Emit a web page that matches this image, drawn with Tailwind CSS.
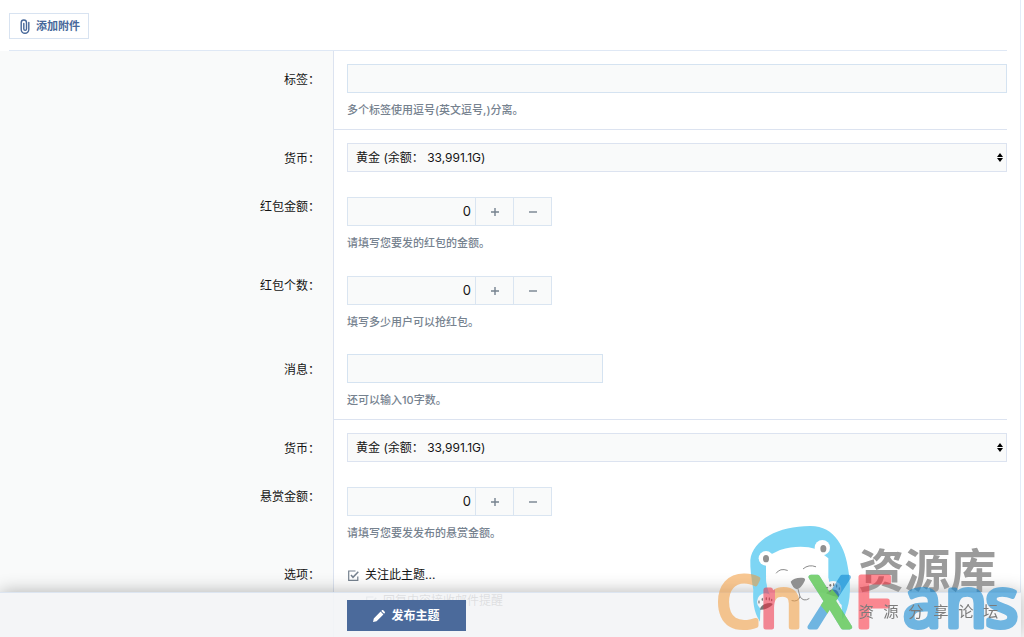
<!DOCTYPE html>
<html lang="zh-CN">

<head>
    <meta charset="UTF-8" />
    <meta name="viewport" content="width=device-width, initial-scale=1" />
    <title>发布主题</title>
    <script src="https://cdn.jsdelivr.net/npm/@tailwindcss/browser@4"></script>
</head>

<body class="bg-white font-[Inter,'Noto_Sans_CJK_SC',sans-serif] text-xs text-[#141414]">
    <div class="min-h-screen flex flex-col mr-[3px] pr-[13px] border-r border-[#e3ecf8]">
        <!-- ADJUNTOS -->
        <div class="ml-[9px] pt-[13px] pb-[11px] border-b border-[#dfe8f5]">
            <button type="button"
                class="flex items-center h-[26px] pl-2.5 pr-2 border border-[#d8e3f1] text-[11px] font-bold text-[#47689a]">
                <svg class="w-[10px] h-[15px] mr-1.5" viewBox="0 0 10 15" fill="none" stroke="currentColor"
                    stroke-width="1.4" stroke-linecap="round">
                    <path d="M8.8 3.5v7A3.8 3.8 0 0 1 1.2 10.500V3.700A2.600 2.600 0 0 1 6.500 3.700V10A1.300 1.300 0 0 1 3.800 10V4.500" />
                </svg>
                添加附件
            </button>
        </div>

        <!-- FORMULARIO -->
        <form id="formTema" class="grow flex flex-col">
            <div class="flex">
                <div class="w-[334px] shrink-0 bg-[#f9fafa] border-r border-[#dce3f0] pt-5 pr-[13px] text-right leading-[18px]">
                    <label for="etiquetas">标签：</label>
                </div>
                <div class="flex-1 pt-[13px] pb-2.5 pl-[13px] border-b border-[#dce3f0]">
                    <input id="etiquetas" type="text" class="block w-full h-[29px] px-2 bg-[#f9fafa] border border-[#d5e3f1]" />
                    <p class="mt-2 text-[11px] leading-[18px] font-medium text-[#76828f]">多个标签使用逗号(英文逗号,)分离。</p>
                </div>
            </div>

            <div class="flex">
                <div class="w-[334px] shrink-0 bg-[#f9fafa] border-r border-[#dce3f0] pt-5 pr-[13px] text-right leading-[18px]">
                    <label for="moneda1">货币：</label>
                </div>
                <div class="flex-1 pt-[13px] pb-[11px] pl-[13px] border-b border-transparent">
                    <div class="relative">
                        <select id="moneda1" class="block appearance-none w-full h-[29px] px-2 bg-[#f9fafa] border border-[#dce3f0]">
                            <option>黄金 (余额： 33,991.1G)</option>
                        </select>
                        <svg class="absolute right-1 top-2.5 w-[6px] h-[9px] pointer-events-none" viewBox="0 0 6 9">
                            <path d="M3 0l3 4H0zM3 9l3-4H0z" />
                        </svg>
                    </div>
                </div>
            </div>

            <div class="flex">
                <div class="w-[334px] shrink-0 bg-[#f9fafa] border-r border-[#dce3f0] pt-[14px] pr-[13px] text-right leading-[18px]">
                    <label for="monto">红包金额：</label>
                </div>
                <div class="flex-1 pt-[13px] pb-2.5 pl-[13px] border-b border-transparent">
                    <div class="contador flex h-[29px] w-[205px] bg-[#f9fafa] border border-[#dae5f1] divide-x divide-[#dae5f1]">
                        <input id="monto" type="text" inputmode="numeric" value="0" class="w-32 px-1 text-right text-[13px]" />
                        <button type="button" data-delta="1" aria-label="增加" class="flex-1 flex items-center justify-center text-[#76828f]">
                            <svg class="w-2 h-2" viewBox="0 0 8 8" stroke="currentColor" stroke-width="1.4"><path d="M0 4h8M4 0v8" /></svg>
                        </button>
                        <button type="button" data-delta="-1" aria-label="减少" class="flex-1 flex items-center justify-center text-[#76828f]">
                            <svg class="w-2 h-2" viewBox="0 0 8 8" stroke="currentColor" stroke-width="1.4"><path d="M0 4h8" /></svg>
                        </button>
                    </div>
                    <p class="mt-2 text-[11px] leading-[18px] font-medium text-[#76828f]">请填写您要发的红包的金额。</p>
                </div>
            </div>

            <div class="flex">
                <div class="w-[334px] shrink-0 bg-[#f9fafa] border-r border-[#dce3f0] pt-[14px] pr-[13px] text-right leading-[18px]">
                    <label for="cantidad">红包个数：</label>
                </div>
                <div class="flex-1 pt-[13px] pb-[9px] pl-[13px] border-b border-transparent">
                    <div class="contador flex h-[29px] w-[205px] bg-[#f9fafa] border border-[#dae5f1] divide-x divide-[#dae5f1]">
                        <input id="cantidad" type="text" inputmode="numeric" value="0" class="w-32 px-1 text-right text-[13px]" />
                        <button type="button" data-delta="1" aria-label="增加" class="flex-1 flex items-center justify-center text-[#76828f]">
                            <svg class="w-2 h-2" viewBox="0 0 8 8" stroke="currentColor" stroke-width="1.4"><path d="M0 4h8M4 0v8" /></svg>
                        </button>
                        <button type="button" data-delta="-1" aria-label="减少" class="flex-1 flex items-center justify-center text-[#76828f]">
                            <svg class="w-2 h-2" viewBox="0 0 8 8" stroke="currentColor" stroke-width="1.4"><path d="M0 4h8" /></svg>
                        </button>
                    </div>
                    <p class="mt-2 text-[11px] leading-[18px] font-medium text-[#76828f]">填写多少用户可以抢红包。</p>
                </div>
            </div>

            <div class="flex">
                <div class="w-[334px] shrink-0 bg-[#f9fafa] border-r border-[#dce3f0] pt-5 pr-[13px] text-right leading-[18px]">
                    <label for="mensaje">消息：</label>
                </div>
                <div class="flex-1 pt-[13px] pb-2.5 pl-[13px] border-b border-[#dce3f0]">
                    <input id="mensaje" type="text" maxlength="10" class="block w-64 h-[29px] px-2 bg-[#f9fafa] border border-[#d5e3f1]" />
                    <p class="mt-2 text-[11px] leading-[18px] font-medium text-[#76828f]">还可以输入10字数。</p>
                </div>
            </div>

            <div class="flex">
                <div class="w-[334px] shrink-0 bg-[#f9fafa] border-r border-[#dce3f0] pt-5 pr-[13px] text-right leading-[18px]">
                    <label for="moneda2">货币：</label>
                </div>
                <div class="flex-1 pt-[13px] pb-[11px] pl-[13px] border-b border-transparent">
                    <div class="relative">
                        <select id="moneda2" class="block appearance-none w-full h-[29px] px-2 bg-[#f9fafa] border border-[#dce3f0]">
                            <option>黄金 (余额： 33,991.1G)</option>
                        </select>
                        <svg class="absolute right-1 top-2.5 w-[6px] h-[9px] pointer-events-none" viewBox="0 0 6 9">
                            <path d="M3 0l3 4H0zM3 9l3-4H0z" />
                        </svg>
                    </div>
                </div>
            </div>

            <div class="flex">
                <div class="w-[334px] shrink-0 bg-[#f9fafa] border-r border-[#dce3f0] pt-[14px] pr-[13px] text-right leading-[18px]">
                    <label for="recompensa">悬赏金额：</label>
                </div>
                <div class="flex-1 pt-[13px] pb-2.5 pl-[13px] border-b border-transparent">
                    <div class="contador flex h-[29px] w-[205px] bg-[#f9fafa] border border-[#dae5f1] divide-x divide-[#dae5f1]">
                        <input id="recompensa" type="text" inputmode="numeric" value="0" class="w-32 px-1 text-right text-[13px]" />
                        <button type="button" data-delta="1" aria-label="增加" class="flex-1 flex items-center justify-center text-[#76828f]">
                            <svg class="w-2 h-2" viewBox="0 0 8 8" stroke="currentColor" stroke-width="1.4"><path d="M0 4h8M4 0v8" /></svg>
                        </button>
                        <button type="button" data-delta="-1" aria-label="减少" class="flex-1 flex items-center justify-center text-[#76828f]">
                            <svg class="w-2 h-2" viewBox="0 0 8 8" stroke="currentColor" stroke-width="1.4"><path d="M0 4h8" /></svg>
                        </button>
                    </div>
                    <p class="mt-2 text-[11px] leading-[18px] font-medium text-[#76828f]">请填写您要发发布的悬赏金额。</p>
                </div>
            </div>

            <!-- OPCIONES -->
            <div class="flex grow">
                <div class="w-[334px] shrink-0 bg-[#f9fafa] border-r border-[#dce3f0] pt-[13px] pr-[13px] text-right leading-[18px]">
                    选项：
                </div>
                <div class="flex-1 pt-[13px] pl-[14px] leading-[18px]">
                    <label class="flex items-center">
                        <span class="grid mr-1.5">
                            <input type="checkbox" checked class="appearance-none col-start-1 row-start-1 w-[11px] h-[11px]" />
                            <svg class="col-start-1 row-start-1 w-[11px] h-[11px] text-[#76828f] pointer-events-none" viewBox="0 0 11 11" fill="none" stroke="currentColor">
                                <path d="M7.500 1H.7V10.300H9.800V6.500" stroke-width="1.2" />
                                <path d="M3 5l2 2.300L10.300 1.700" stroke-width="1.500" />
                            </svg>
                        </span>
                        关注此主题...
                    </label>
                    <label class="flex items-center mt-2 ml-[18px]">
                        <span class="grid mr-1.5">
                            <input type="checkbox" checked class="appearance-none col-start-1 row-start-1 w-[11px] h-[11px]" />
                            <svg class="col-start-1 row-start-1 w-[11px] h-[11px] text-[#76828f] pointer-events-none" viewBox="0 0 11 11" fill="none" stroke="currentColor">
                                <path d="M7.500 1H.7V10.300H9.800V6.500" stroke-width="1.2" />
                                <path d="M3 5l2 2.300L10.300 1.700" stroke-width="1.500" />
                            </svg>
                        </span>
                        回复内容接收邮件提醒
                    </label>
                </div>
            </div>
        </form>
    </div>

    <!-- BARRA INFERIOR -->
    <div class="fixed bottom-0 inset-x-0 mr-[3px] pt-[7px] pb-1.5 pl-[347px] bg-[#f3f4f6]/90 border-t border-[#dce5f1] shadow-[0_0_18px_rgba(0,0,0,0.3)]">
        <button type="submit" form="formTema" class="flex items-center justify-center w-[119px] h-[31px] bg-[#4b6a9b] text-white font-bold">
            <svg class="w-3 h-3 mr-1.5" viewBox="0 0 12 12" fill="currentColor">
                <path d="M0 12l.8-3.600L7.600 1.600l2.800 2.800L3.600 11.200zM8.300.9l.6-.6c.4-.4 1-.4 1.400 0l1.400 1.400c.4.4.4 1 0 1.400l-.6.6z" />
            </svg>
            发布主题
        </button>
    </div>

    <!-- LOGO -->
    <svg class="fixed bottom-0 right-0 w-[324px] h-[137px] pointer-events-none" viewBox="0 0 972 411" role="img" aria-label="cnXFans 资源库">
        <defs>
            <mask id="cara" maskUnits="userSpaceOnUse" x="0" y="0" width="972" height="411">
                <rect width="972" height="411" fill="#fff" />
                <path d="M198 175Q215 160 240 150Q300 132 348 147L385 175V235Q388 285 425 315L428 411H180V365L190 320L212 290Q198 265 198 225Z" fill="#000" />
                <circle cx="198" cy="175" r="22" fill="#000" />
                <circle cx="367" cy="143" r="23" fill="#000" />
                <circle cx="196" cy="305" r="25" fill="#000" />
                <ellipse cx="399" cy="267" rx="25" ry="24" fill="#000" />
            </mask>
            <linearGradient id="colorN" gradientUnits="userSpaceOnUse" x1="0" x2="972" y1="0" y2="0">
                <stop offset="0.230" stop-color="#f02a42" />
                <stop offset="0.230" stop-color="#f29a3a" />
            </linearGradient>
            <clipPath id="diagonal">
                <path d="M295 235L345 205L485 375L435 405Z" />
            </clipPath>
        </defs>
        <path mask="url(#cara)" fill="#7dd5f4"
            d="M180 365C160 335 158 300 160 270C154 235 150 205 151 180C158 120 235 78 330 78C405 77 437 145 445 210C455 270 450 320 428 358Q418 340 418 305Q390 275 385 235L198 230Q200 265 212 285L190 282Q180 315 180 365Z" />
        <g fill="#909090">
            <ellipse cx="198" cy="176" rx="9" ry="11" />
            <ellipse cx="370" cy="146" rx="9" ry="11" />
            <path d="M272 245Q282 232 306 233Q319 234 314 243Q304 265 290 268Q277 262 272 245Z" />
        </g>
        <g fill="none" stroke="#8a8a8a" stroke-width="3" stroke-linecap="round">
            <path d="M229 219Q240 203 262 211M310 206Q326 192 347 200" />
            <path d="M294 267L300 290Q294 307 276 302M300 290Q310 307 327 296" />
        </g>
        <g fill="#777">
            <path d="M180 329Q181 315 202 310Q220 307 217 315Q200 330 180 329ZM378 280Q391 264 408 270Q420 279 416 291Q398 290 378 280Z" />
            <ellipse cx="177" cy="306" rx="2" ry="5" />
            <ellipse cx="187" cy="298" rx="2" ry="5" />
            <ellipse cx="199" cy="296" rx="2" ry="5" />
            <ellipse cx="208" cy="297" rx="2" ry="5" />
            <ellipse cx="215" cy="300" rx="2" ry="4" />
            <ellipse cx="381" cy="263" rx="4" ry="2" />
            <ellipse cx="391" cy="256" rx="3" ry="4" />
            <ellipse cx="401" cy="254" rx="2" ry="5" />
            <ellipse cx="410" cy="258" rx="2" ry="5" />
            <ellipse cx="418" cy="266" rx="2" ry="4" />
        </g>
        <text x="475" y="262" font-family="Noto Sans CJK SC" font-size="138" font-weight="700" fill="#9b9b9b">资源库</text>
        <g font-family="Open Sans" font-size="208" font-weight="400" stroke-width="15" stroke-linejoin="round">
            <text x="49" y="380" fill="#f29a3a" stroke="#f29a3a" opacity="0.550">C</text>
            <text x="180" y="380" fill="url(#colorN)" stroke="url(#colorN)" opacity="0.550">n</text>
            <text x="329" y="380" fill="#0c84d0" stroke="#0c84d0" opacity="0.570">X</text>
            <text x="329" y="380" fill="#7fdc45" stroke="#7fdc45" opacity="0.700" clip-path="url(#diagonal)" aria-hidden="true">X</text>
            <text x="463" y="380" fill="#ff2c3c" stroke="#ff2c3c" opacity="0.550">F</text>
            <text x="609" y="380" fill="#0c84d0" stroke="#0c84d0" opacity="0.570">a</text>
            <text x="734" y="380" fill="#0c84d0" stroke="#0c84d0" opacity="0.570">n</text>
            <text x="856" y="380" fill="#0c84d0" stroke="#0c84d0" opacity="0.570">s</text>
        </g>
        <text x="476 550 625 700 775 849" y="351" font-family="Noto Sans CJK SC" font-size="46" fill="#7b7b7b">资源分享论坛</text>
    </svg>

    <script>
        // BOTONES + / -
        document.querySelectorAll(".contador button").forEach(btn =>
            btn.addEventListener("click", () => {
                const campo = btn.parentElement.querySelector("input");
                campo.value = Math.max(0, Number(campo.value) + Number(btn.dataset.delta));
            })
        );
    </script>
</body>

</html>
